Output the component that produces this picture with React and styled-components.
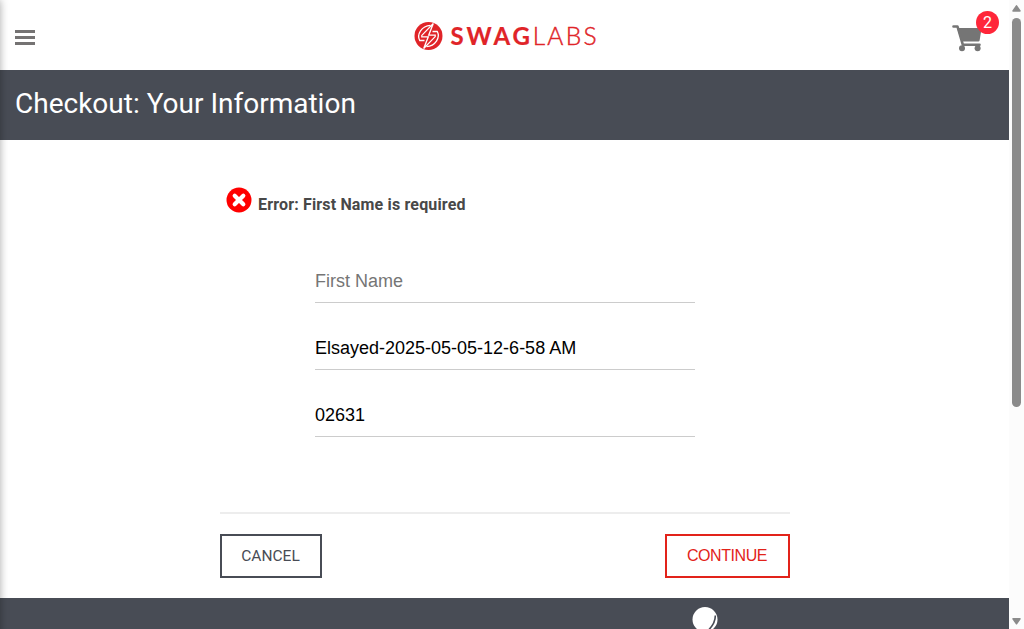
import React from "react";
import styled, { createGlobalStyle } from "styled-components";

const GlobalStyle = createGlobalStyle`
  * { box-sizing: border-box; }
  body { margin: 0; background: #fff; overflow: hidden; }
`;

const Screen = styled.div`
  position: relative;
  display: flex;
  width: 1024px;
  height: 629px;
  overflow: hidden;
  font-family: Roboto, "Liberation Sans", sans-serif;
`;

const Page = styled.div`
  display: flex;
  flex-direction: column;
  width: 1009px;
`;

const MenuShadow = styled.div`
  position: absolute;
  left: -10px;
  top: 0;
  width: 10px;
  height: 640px;
  box-shadow: 0 0 8px 0 rgba(0, 0, 0, 0.35);
`;

const Header = styled.header`
  display: flex;
  align-items: flex-start;
  justify-content: space-between;
  height: 70px;
  padding: 0 10px 0 15px;
`;

const MenuButton = styled.button`
  display: flex;
  flex-direction: column;
  gap: 3px;
  width: 63px;
  margin: 30px 0 0;
  padding: 0;
  border: 0;
  background: none;
`;

const MenuBar = styled.span`
  width: 20px;
  height: 3px;
  background: #757373;
`;

const Logo = styled.svg`
  display: block;
  width: 190px;
  height: 36px;
  margin-top: 18px;
`;

const Cart = styled.div`
  position: relative;
  width: 67px;
  height: 60px;
`;

const CartIcon = styled.svg`
  display: block;
  margin: 23px 0 0 18px;
`;

const Badge = styled.span`
  position: absolute;
  top: 11px;
  right: 0;
  width: 23px;
  height: 23px;
  border-radius: 50%;
  background: #ff2639;
  color: #fff;
  font-size: 16px;
  line-height: 23px;
  text-align: center;
`;

const TitleBar = styled.div`
  height: 70px;
  padding: 15px;
  background: #484c55;
  color: #fff;
  font-size: 28px;
  line-height: 37px;
`;

const Form = styled.form`
  display: flex;
  flex-direction: column;
  width: 570px;
  height: 458px;
  margin-left: 220px;
`;

const ErrorRow = styled.div`
  display: flex;
  height: 98px;
  padding: 47px 0 0 6px;
`;

const ErrorText = styled.h3`
  margin: 7px 0 0 6px;
  color: #484848;
  font-size: 16px;
  font-weight: 700;
  letter-spacing: 0.16px;
  line-height: 22px;
  white-space: nowrap;
`;

const Field = styled.input`
  width: 380px;
  height: 45px;
  margin: 20px auto 2px;
  padding: 2px 0 0;
  border: 0;
  border-bottom: 1px solid #ccc;
  border-radius: 0;
  outline: 0;
  background: transparent;
  color: #000;
  font: 18px "Liberation Sans", Arial, sans-serif;

  &::placeholder { color: #757575; opacity: 1; }
`;

const Actions = styled.div`
  display: flex;
  justify-content: space-between;
  margin-top: 73px;
  padding-top: 20px;
  border-top: 2px solid #ededed;
`;

const ActionButton = styled.button`
  width: ${({ $primary }) => ($primary ? 125 : 102)}px;
  height: 44px;
  padding: 0 1px 0 0;
  border: 2px solid ${({ $primary }) => ($primary ? "#e2231a" : "#484c55")};
  background: #fff;
  color: ${({ $primary }) => ($primary ? "#e2231a" : "#484c55")};
  font-family: ${({ $primary }) => ($primary ? '"Liberation Sans", Arial' : "Roboto")}, sans-serif;
  font-size: ${({ $primary }) => ($primary ? 16 : 15.5)}px;
  letter-spacing: ${({ $primary }) => ($primary ? "-0.45px" : "0")};
  line-height: 20px;
`;

const Footer = styled.footer`
  display: flex;
  height: 31px;
  padding: 9px 0 0 692px;
  background: #484c55;
  overflow: hidden;
`;

const Scrollbar = styled.div`
  display: flex;
  flex-direction: column;
  align-items: center;
  width: 15px;
  height: 629px;
  background: #fcfcfc;
`;

const Arrow = styled.svg`
  display: block;
  width: 15px;
  height: 18px;
`;

const Thumb = styled.div`
  width: 9px;
  height: 389px;
  margin-bottom: 204px;
  border-radius: 5px;
  background: #8b8b8b;
`;

export default function App() {
  return (
    <>
      <GlobalStyle />
      <Screen>
        <Page>
          <Header>
            <MenuButton aria-label="Open menu">
              <MenuBar />
              <MenuBar />
              <MenuBar />
            </MenuButton>
            <Logo viewBox="0 0 190 36" role="img" aria-label="Swag Labs">
              <circle cx="18.5" cy="18" r="14" fill="#e02428" />
              <g fill="none" stroke="#fff" strokeWidth="1.3" strokeLinejoin="miter">
                <path d="M22.5 13.5H27.3C30.5 19.5 25.5 28 16.5 28.6" />
                <path d="M14.5 22.5H9.7C6.5 16.5 11.5 8 20.5 7.4" />
                <path d="M23.3 5.5 11.8 17.4V18.8H18.3L13.7 30.5 25.2 18.6V17.2H18.7Z" />
              </g>
              <g fill="#e02428" stroke="#e02428" fontFamily="Lato, sans-serif" fontSize="24.5">
                <text x="40.5" y="26.5" fontWeight="700" letterSpacing="3" textLength="82.5" lengthAdjust="spacingAndGlyphs" strokeWidth="0.2">SWAG</text>
                <text x="122.7" y="26.5" fontWeight="300" textLength="63.8" strokeWidth="0.45">LABS</text>
              </g>
            </Logo>
            <Cart>
              <CartIcon width="34" height="30" viewBox="0 0 34 30">
                <path d="M3.5 3.5H7.5L12.8 21.7H29.5" fill="none" stroke="#757575" strokeWidth="2.6" strokeLinejoin="round" strokeLinecap="round" />
                <path d="M7 5H30.7Q31.8 5 31.5 6L29.6 17.4Q29.4 18.4 28.4 18.4H11.5Z" fill="#757575" />
                <circle cx="12" cy="25.3" r="3" fill="#757575" />
                <circle cx="27.6" cy="25.3" r="3" fill="#757575" />
              </CartIcon>
              <Badge>2</Badge>
            </Cart>
          </Header>
          <TitleBar>Checkout: Your Information</TitleBar>
          <Form>
            <ErrorRow>
              <svg width="26" height="26" viewBox="0 0 26 26">
                <circle cx="13" cy="13" r="12.5" fill="red" />
                <path d="m8.7 8.7 8.6 8.6m0-8.6-8.6 8.6" stroke="#fff" strokeWidth="4.2" strokeLinecap="round" />
              </svg>
              <ErrorText>Error: First Name is required</ErrorText>
            </ErrorRow>
            <Field placeholder="First Name" />
            <Field defaultValue="Elsayed-2025-05-05-12-6-58 AM" />
            <Field defaultValue="02631" />
            <Actions>
              <ActionButton type="button">CANCEL</ActionButton>
              <ActionButton type="button" $primary>CONTINUE</ActionButton>
            </Actions>
          </Form>
          <Footer>
            <svg width="26" height="26" viewBox="0 0 26 26">
              <circle cx="13" cy="12.5" r="12.5" fill="#fff" />
              <path d="M23.3 8.5C23.5 14.5 19.5 20.5 14.5 25" fill="none" stroke="#484c55" strokeWidth="1.6" />
            </svg>
          </Footer>
        </Page>
        <Scrollbar>
          <Arrow viewBox="0 0 15 18">
            <path d="M7.5 5.8 11 11H4Z" fill="#8b8b8b" stroke="#8b8b8b" strokeWidth="1.5" strokeLinejoin="round" />
          </Arrow>
          <Thumb />
          <Arrow viewBox="0 0 15 18">
            <path d="M7.5 12.8 11 7.8H4Z" fill="#8b8b8b" stroke="#8b8b8b" strokeWidth="1.5" strokeLinejoin="round" />
          </Arrow>
        </Scrollbar>
        <MenuShadow />
      </Screen>
    </>
  );
}
